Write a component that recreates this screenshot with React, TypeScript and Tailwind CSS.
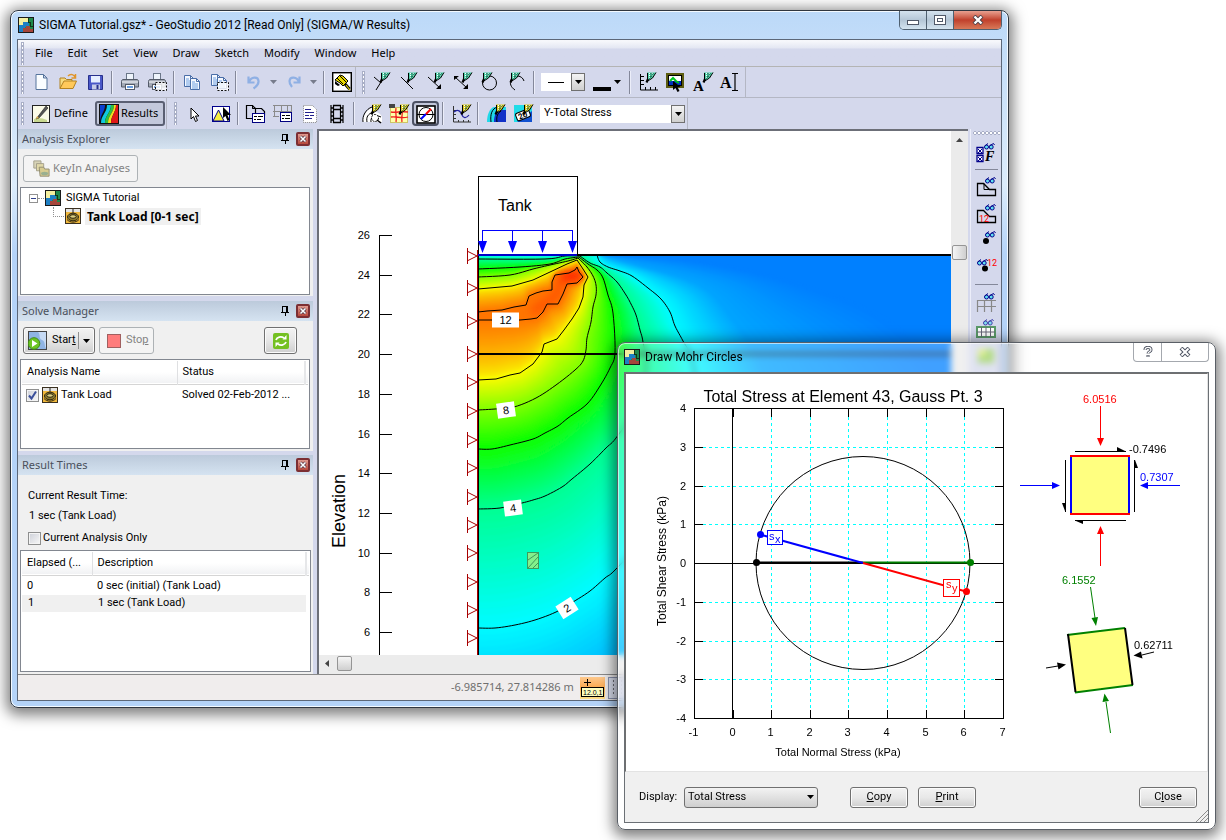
import React from "react";

type Pt = [number, number];

/* ---------- contour data ---------- */

type Level = { color: [number, number, number]; line: boolean; outer: Pt[]; inner: Pt[] };

const levels: Level[] = [
  {
    color: [0, 128, 255],
    line: false,
    outer: [[478, 900], [700, 800], [900, 600], [950, 420], [900, 330], [800, 285], [700, 262], [640, 257], [604, 255]],
    inner: [[604, 255], [560, 254], [478, 254]],
  },
  {
    color: [0, 165, 255],
    line: false,
    outer: [[478, 740], [560, 720], [640, 670], [720, 580], [780, 450], [764, 370], [730, 315], [700, 285], [640, 266], [610, 258], [601, 255]],
    inner: [[601, 255], [560, 254], [478, 254]],
  },
  {
    color: [0, 252, 255],
    line: true,
    outer: [[478, 628], [495, 628], [515, 625], [535, 620], [556, 612], [573, 602], [590, 591], [605, 578], [616, 569], [650, 530], [684, 470], [698, 410], [692, 360], [683, 341], [675, 326], [670, 312], [661, 299], [648, 288], [632, 276], [620, 271], [608, 267], [600, 262], [597, 255]],
    inner: [[597, 255], [560, 255], [478, 255]],
  },
  {
    color: [0, 255, 144],
    line: true,
    outer: [[478, 509], [500, 508], [522, 503], [533, 500], [545, 496], [562, 487], [572, 479], [590, 464], [606, 448], [616, 438], [634, 410], [646, 370], [643, 342], [640, 330], [636, 315], [631, 304], [626, 295], [617, 282], [607, 273], [600, 267], [590, 263], [580, 256]],
    inner: [[580, 256], [565, 256], [545, 259], [478, 259]],
  },
  {
    color: [10, 255, 0],
    line: true,
    outer: [[478, 449], [492, 449], [510, 445], [533, 439], [545, 433], [558, 426], [568, 418], [587, 404], [600, 386], [610, 368], [615, 353], [613, 313], [608, 295], [603, 278], [597, 270], [588, 264], [579, 257]],
    inner: [[579, 257], [565, 259], [550, 264], [520, 267], [478, 269]],
  },
  {
    color: [132, 255, 0],
    line: true,
    outer: [[478, 410], [495, 409], [514, 407], [536, 398], [556, 385], [575, 370], [583, 361], [586, 350], [587, 338], [591, 322], [593, 307], [596, 295], [596, 285], [593, 276], [587, 267], [578, 258]],
    inner: [[578, 258], [568, 261], [550, 265], [533, 269], [510, 275], [478, 277]],
  },
  {
    color: [250, 250, 0],
    line: true,
    outer: [[478, 380], [496, 379], [510, 375], [520, 373], [533, 364], [542, 352], [544, 344], [557, 339], [564, 330], [572, 319], [579, 308], [583, 297], [584, 285], [588, 277], [583, 269], [577, 260]],
    inner: [[577, 260], [567, 264], [550, 272], [533, 280], [512, 286], [478, 289]],
  },
  {
    color: [255, 116, 0],
    line: true,
    outer: [[478, 320], [520, 320], [531, 319], [537, 318], [543, 312], [547, 304], [558, 304], [563, 294], [567, 284], [577, 283], [583, 277], [579, 272], [577, 267]],
    inner: [[577, 267], [575, 270], [569, 273], [555, 275], [552, 282], [552, 290], [543, 291], [536, 293], [529, 296], [526, 305], [514, 307], [502, 310], [487, 311], [478, 312]],
  },
];

function smooth(points: Pt[]): Pt[] {
  const result: Pt[] = [];
  for (let i = 0; i < points.length - 1; i++) {
    const a = points[Math.max(i - 1, 0)];
    const b = points[i];
    const c = points[i + 1];
    const d = points[Math.min(i + 2, points.length - 1)];
    for (let s = 0; s < 6; s++) {
      const t = s / 6;
      const at = (k: 0 | 1) =>
        0.5 * (2 * b[k] + (c[k] - a[k]) * t + (2 * a[k] - 5 * b[k] + 4 * c[k] - d[k]) * t * t + (3 * b[k] - a[k] - 3 * c[k] + d[k]) * t * t * t);
      result.push([at(0), at(1)]);
    }
  }
  result.push(points[points.length - 1]);
  return result;
}

levels.slice(0, 6).forEach((l) => {
  l.outer = smooth(l.outer);
  l.inner = smooth(l.inner);
});

function resample(points: Pt[], count: number): Pt[] {
  const dist = [0];
  for (let i = 1; i < points.length; i++) {
    dist.push(dist[i - 1] + Math.hypot(points[i][0] - points[i - 1][0], points[i][1] - points[i - 1][1]));
  }
  const total = dist[dist.length - 1];
  const result: Pt[] = [];
  let seg = 1;
  for (let i = 0; i < count; i++) {
    const target = (total * i) / (count - 1);
    while (seg < points.length - 1 && dist[seg] < target) seg++;
    const t = (target - dist[seg - 1]) / (dist[seg] - dist[seg - 1]);
    const a = points[seg - 1];
    const b = points[seg];
    result.push([a[0] + (b[0] - a[0]) * t, a[1] + (b[1] - a[1]) * t]);
  }
  return result;
}

const STEPS = 18;

function buildBands() {
  const bands: { points: string; fill: string }[] = [];
  const shapes = levels.map((l) => [...resample(l.outer, 90), ...resample(l.inner, 40)]);
  const last = levels.length - 2;
  for (let i = 0; i < levels.length - 1; i++) {
    for (let s = 0; s < STEPS; s++) {
      const t = s / STEPS;
      const mix = i === last ? Math.pow(t, 0.7) : t;
      const points = shapes[i]
        .map((p, k) => {
          const q = shapes[i + 1][k];
          return (p[0] + (q[0] - p[0]) * t).toFixed(1) + "," + (p[1] + (q[1] - p[1]) * t).toFixed(1);
        })
        .join(" ");
      const c = levels[i].color.map((v, k) => Math.round(v + (levels[i + 1].color[k] - v) * mix));
      bands.push({ points, fill: `rgb(${c.join(",")})` });
    }
  }
  bands.push({
    points: shapes[shapes.length - 1].map((p) => p.join(",")).join(" "),
    fill: `rgb(${levels[levels.length - 1].color.join(",")})`,
  });
  return bands;
}

const bands = buildBands();

/* ---------- finite element view ---------- */

const elevations = [26, 24, 22, 20, 18, 16, 14, 12, 10, 8, 6];
const supports = [256, 288, 321, 354, 382, 411, 440, 468, 497, 525, 553, 582, 610, 638];

function ContourLabel({ x, y, w, angle, text }: { x: number; y: number; w: number; angle: number; text: string }) {
  return (
    <g transform={`translate(${x} ${y}) rotate(${angle})`}>
      <rect x={-w / 2} y={-7.5} width={w} height={15} fill="#fff" />
      <text y={4} textAnchor="middle" fontSize="11">{text}</text>
    </g>
  );
}

function SectionView() {
  return (
    <svg className="block h-[524px] min-w-0 flex-1 bg-white font-['Liberation_Sans',sans-serif]" role="img" aria-label="Y-Total Stress contours">
      <defs>
        <clipPath id="soil"><rect x="478" y="255" width="3000" height="400" /></clipPath>
        <filter id="soft" x="-50%" y="-50%" width="200%" height="200%"><feGaussianBlur stdDeviation="4" /></filter>
        <filter id="smooth" x="-5%" y="-5%" width="110%" height="110%"><feGaussianBlur stdDeviation="1" /></filter>
      </defs>
      <g transform="translate(-319 -131)">
        <g clipPath="url(#soil)">
          <rect x="470" y="250" width="3000" height="420" fill="#0080ff" />
          <g filter="url(#smooth)">
            {bands.map((b, i) => <polygon key={i} points={b.points} fill={b.fill} />)}
          </g>
          <g filter="url(#soft)" fill="none" strokeLinecap="round" strokeLinejoin="round">
            <path d="M535 310 L556 296 L561 281 L576 277" stroke="#ff5500" strokeWidth="9" />
            <path d="M564 277 L578 276" stroke="#ff1000" strokeWidth="8" />
          </g>
          {levels.filter((l) => l.line).map((l, i) => (
            <g key={i} fill="none" stroke="#000" strokeWidth="1">
              <polyline points={l.outer.map((p) => p.join(",")).join(" ")} />
              <polyline points={l.inner.map((p) => p.join(",")).join(" ")} />
            </g>
          ))}
        </g>
        <g shapeRendering="crispEdges">
          <path d="M478 255H3500" stroke="#000" strokeWidth="2" />
          <path d="M478 354H3500" stroke="#000" strokeWidth="2" />
          <path d="M478.500 176.500H577.500V255M478.500 176V655" stroke="#000" fill="none" />
          <path d="M478 255H577" stroke="#0000c8" strokeWidth="2" />
          <path d="M477.500 250V655" stroke="#a80000" />
          <path d="M482.500 252V230.500H572.500V252M512.500 231V252M542.500 231V252" stroke="#00f" fill="none" />
          <path d="M379.500 235V655" stroke="#000" />
          {elevations.map((e, i) => <path key={e} d={`M379 ${Math.round(235 + i * 39.7) + 0.5}H392`} stroke="#000" />)}
        </g>
        {[482.5, 512.5, 542.5, 572.5].map((x) => <path key={x} d={`M${x - 4.5} 241H${x + 4.5}L${x} 253Z`} fill="#00f" />)}
        {supports.map((y) => (
          <path key={y} d={`M467.500 ${y - 8}V${y + 8}M468 ${y - 4.5}L477 ${y}L468 ${y + 4.5}`} stroke="#a80000" fill="none" />
        ))}
        {elevations.map((e, i) => (
          <text key={e} x="370" y={Math.round(239 + i * 39.7)} textAnchor="end" fontSize="11">{e}</text>
        ))}
        <text transform="translate(345 511) rotate(-90)" textAnchor="middle" fontSize="18">Elevation</text>
        <text x="498" y="211" fontSize="16">Tank</text>
        <ContourLabel x={505.5} y={320} w={27} angle={0} text="12" />
        <ContourLabel x={506} y={410} w={18} angle={-8} text="8" />
        <ContourLabel x={513} y={508} w={18} angle={-7} text="4" />
        <ContourLabel x={567} y={608} w={18} angle={-32} text="2" />
        <rect x="527.500" y="552.500" width="11" height="16" fill="#84f08c" stroke="#3f9a5c" />
        <path d="M528 560L538 553M528 568L538 557M533 568L538 563" stroke="#3f9a5c" fill="none" />
      </g>
    </svg>
  );
}

/* ---------- Mohr circle chart ---------- */

const ticks = [0, 1, 2, 3, 4, 5, 6, 7, 8];
const tx = (i: number) => Math.round(694 + i * 38.6) + 0.5;
const ty = (i: number) => Math.round(408 + i * 38.75) + 0.5;

function MohrChart() {
  return (
    <svg className="block h-[397px] w-full bg-white font-['Liberation_Sans',sans-serif]" role="img" aria-label="Mohr circle, total stress">
      <g transform="translate(-626 -374)">
        <g shapeRendering="crispEdges" fill="none">
          {ticks.slice(2, 8).map((i) => <path key={i} d={`M${tx(i)} 417V710`} stroke="#00ffff" strokeDasharray="3 3" />)}
          {ticks.slice(1, 8).filter((i) => i !== 4).map((i) => <path key={i} d={`M703 ${ty(i)}H995`} stroke="#00ffff" strokeDasharray="3 3" />)}
          <rect x="694.500" y="408.500" width="309" height="310" stroke="#000" />
          {ticks.slice(1, 8).map((i) => <path key={i} d={`M${tx(i)} 409V417M${tx(i)} 710V718M695 ${ty(i)}H703M995 ${ty(i)}H1003`} stroke="#000" />)}
          <path d="M732.500 409V718M695 563.500H1003" stroke="#000" />
        </g>
        <ellipse cx="863" cy="563" rx="107" ry="106.500" fill="none" stroke="#000" />
        <path d="M756 562.500H863" stroke="#000" strokeWidth="2" />
        <path d="M863 562.500H970" stroke="#008000" strokeWidth="2" />
        <path d="M760 534.500L863 563" stroke="#00f" strokeWidth="2" />
        <path d="M863 563L966 591.500" stroke="#f00" strokeWidth="2" />
        <circle cx="756.500" cy="562.500" r="3.500" />
        <circle cx="970.500" cy="562.500" r="3.500" fill="#008000" />
        <circle cx="760.500" cy="534.500" r="3.500" fill="#00f" />
        <circle cx="966.500" cy="591.500" r="3.500" fill="#f00" />
        <rect x="767.500" y="530.500" width="15" height="14" fill="#fff" stroke="#00f" />
        <text x="769" y="540" fontSize="11" fill="#00f">s</text>
        <text x="775" y="543" fontSize="11" fill="#00f">x</text>
        <rect x="943.500" y="579.500" width="16" height="17" fill="#fff" stroke="#f00" />
        <text x="946" y="588" fontSize="11" fill="#f00">s</text>
        <text x="952" y="592" fontSize="11" fill="#f00">y</text>

        <text x="843" y="402" textAnchor="middle" fontSize="16">Total Stress at Element 43, Gauss Pt. 3</text>
        {ticks.map((i) => <text key={i} x="686" y={ty(i) + 3} textAnchor="end" fontSize="11">{4 - i}</text>)}
        {ticks.map((i) => <text key={i} x={tx(i) - 1} y="736" textAnchor="middle" fontSize="11">{i - 1}</text>)}
        <text x="838" y="756" textAnchor="middle" fontSize="11">Total Normal Stress (kPa)</text>
        <text transform="translate(666 561) rotate(-90)" textAnchor="middle" fontSize="12">Total Shear Stress (kPa)</text>

        <g shapeRendering="crispEdges">
          <rect x="1071" y="456" width="58" height="58" fill="#ffff80" />
          <path d="M1071 456V514M1129 456V514" stroke="#00f" strokeWidth="2" />
          <path d="M1070 456H1130M1070 514H1130" stroke="#f00" strokeWidth="2" />
          <path d="M1100.500 406V440M1100.500 532V566" stroke="#f00" />
          <path d="M1020 485.500H1054M1146 485.500H1180" stroke="#00f" />
          <path d="M1075 451.500H1126M1075 520.500H1126M1065.500 460V512M1134.500 460V512" stroke="#000" />
        </g>
        <path d="M1097 438H1104L1100.500 446ZM1097 534H1104L1100.500 526Z" fill="#f00" />
        <path d="M1052 482V489L1060 485.500ZM1148 482V489L1140 485.500Z" fill="#00f" />
        <path d="M1117 451V447L1125 451ZM1083 521V524L1076 521ZM1135 468H1138L1135 460ZM1065 503H1062L1065 511Z" />
        <text x="1083" y="403" fontSize="11" fill="#f00">6.0516</text>
        <text x="1129" y="453" fontSize="11">-0.7496</text>
        <text x="1140" y="481" fontSize="11" fill="#00f">0.7307</text>

        <path d="M1068 635L1125 628L1132.500 685L1075.500 692Z" fill="#ffff80" />
        <path d="M1067 635L1125 628M1075 692.500L1133 685" stroke="#008000" strokeWidth="2" />
        <path d="M1068 634L1075.500 692M1125 628L1132.500 685" stroke="#000" strokeWidth="2" />
        <path d="M1090.500 587L1095 618M1110.500 733L1106 702" stroke="#008000" />
        <path d="M1091.500 618L1098 617L1096 626ZM1102.500 702L1109 701L1104.500 693.500Z" fill="#008000" />
        <path d="M1046 668L1058 666M1154 652L1142 655" stroke="#000" />
        <path d="M1057 662.500L1058.500 669.500L1066 664.500ZM1141 651.500L1142.500 658.500L1133.500 655.500Z" />
        <text x="1062" y="584" fontSize="11" fill="#008000">6.1552</text>
        <text x="1134" y="649" fontSize="11">0.62711</text>
      </g>
    </svg>
  );
}

/* ---------- icons ---------- */

function Ico({ size = 20, children }: { size?: number; children: React.ReactNode }) {
  return (
    <svg width={size} height={size} viewBox="0 0 20 20" fill="none" className="shrink-0 overflow-visible" aria-hidden="true">
      {children}
    </svg>
  );
}

const Logo = () => (
  <svg width="16" height="16" viewBox="0 0 16 16" className="shrink-0" shapeRendering="crispEdges" aria-hidden="true">
    <rect width="16" height="16" fill="#1a1a1a" />
    <rect x="1" y="1" width="14" height="14" fill="#1f8a4c" />
    <path d="M1 1h9v4H6v3H1z" fill="#f4efa0" />
    <path d="M1 8h4V5h6v5H7v5H1z" fill="#1f7fc4" />
    <path d="M5 15v-4h3V9h4v3h3v3z" fill="#a5463a" />
    <path d="M10 1v4h2v4h3" stroke="#103818" fill="none" />
  </svg>
);

const TankIcon = () => (
  <svg width="16" height="16" viewBox="0 0 16 16" className="shrink-0" aria-hidden="true">
    <rect x=".5" y=".5" width="15" height="15" fill="#f0b83c" stroke="#3a3020" />
    <rect x="1" y="1" width="14" height="3" fill="#e4e4e4" />
    <path d="M8 1v4" stroke="#222" />
    <ellipse cx="8" cy="9" rx="5.500" ry="3.800" fill="#8c7a30" stroke="#2a2410" />
    <ellipse cx="8" cy="8.500" rx="3.200" ry="1.800" fill="#dccf80" stroke="#2a2410" />
    <path d="M2 11.500c3 3.500 9 3.500 12 0" stroke="#2a2410" fill="none" />
  </svg>
);

const Page = ({ x, y }: { x: number; y: number }) => (
  <g transform={`translate(${x} ${y})`}>
    <path d="M.5.5h6l3 3v8H.5z" fill="#f4f8ff" stroke="#4a6ea8" />
    <path d="M6.500.5v3h3" stroke="#4a6ea8" />
    <path d="M2 4h3M2 6h6M2 8h6M2 10h6" stroke="#6fa0e0" />
  </g>
);

const Printer = () => (
  <g>
    <rect x="6.500" y="1.500" width="7" height="6" fill="#eef4fb" stroke="#6a7688" />
    <path d="M3 7.500h14c1 0 1.500 1 1.500 2V15h-17V9.500c0-1 .5-2 1.500-2z" fill="#a3a9b5" stroke="#535a68" />
    <path d="M2 10h16" stroke="#dfe3ea" strokeWidth="1.500" />
    <rect x="5.500" y="12.500" width="9" height="5" fill="#fff" stroke="#535a68" />
    <path d="M7 15h6" stroke="#3a80d8" strokeWidth="1.500" />
  </g>
);

const Marquee = () => <rect x="8.500" y="10.500" width="11" height="8" fill="#fff" fillOpacity=".8" stroke="#111" strokeDasharray="2 1.500" />;

const Pen = ({ x = 0, y = 0, c = "#4fd0a8" }: { x?: number; y?: number; c?: string }) => (
  <g transform={`translate(${x} ${y})`}>
    <path d="M1 .5h9L6.500 6 1 9z" fill={c} />
    <path d="M1.500 1v8M10 .5L6.500 6 1 9.500" stroke="#000" />
    <path d="M3.500 1v5M6 1v3" stroke="#fff" strokeDasharray="1 1" />
    <path d="M5 1v5M7.500 1.500L3 7" stroke="#0a5038" strokeDasharray="1.500 1" />
    <path d="M2 7L.5 10.500" stroke="#000" strokeWidth="2.200" />
  </g>
);
const GoldPen = ({ x = 0, y = 0 }: { x?: number; y?: number }) => <Pen x={x} y={y} c="#e0cc20" />;

const Glasses = ({ x = 0, y = 0, o = 1 }: { x?: number; y?: number; o?: number }) => (
  <g transform={`translate(${x} ${y})`} stroke="#00008b" fill="#60e0f0" opacity={o}>
    <circle cx="2.500" cy="4" r="2" />
    <circle cx="7.200" cy="4" r="2" />
    <path d="M.8 3L4 .5M6 2.500L9.500 .5l1 1.500" fill="none" />
  </g>
);

const icons: Record<string, React.ReactNode> = {
  "New": <path d="M5 2.500h7.500l3.500 3.500V17.500H5zM12.500 2.500V6H16" fill="#fafdff" stroke="#56749c" />,
  "Open": (
    <g>
      <path d="M2 16.500V6h5l1.500 1.500H14V10" fill="#f7dc82" stroke="#b38221" />
      <path d="M2 16.500L6 9h12.500L15 16.500z" fill="#ffc95a" stroke="#b38221" />
      <path d="M10 4c3-3 6-1 7 1M17.500 2v4h-4" stroke="#e0952a" strokeWidth="1.500" />
    </g>
  ),
  "Save": (
    <g>
      <path d="M3.500 3.500h14v14h-14z" fill="#4a58c8" stroke="#27308c" />
      <rect x="6" y="4" width="9" height="6.500" fill="#e6eeff" />
      <rect x="7" y="12.500" width="8" height="5" fill="#c6cce8" />
      <rect x="11.500" y="13" width="2" height="4" fill="#27308c" />
    </g>
  ),
  "Print": <Printer />,
  "Print Selection": <g><Printer /><Marquee /></g>,
  "Copy": <g><Page x={2} y={3} /><Page x={8} y={6} /></g>,
  "Copy Selection": <g><Page x={2} y={2} /><Page x={8} y={5} /><Marquee /></g>,
  "Undo": <path d="M4.500 4.500v6h6M5 10c2-5.500 9-6 9.500-1 .3 3-2 5.500-5 7.500" stroke="#8fb0e4" strokeWidth="2.200" />,
  "Redo": <path d="M15.500 4.500v6h-6M15 10c-2-5.500-9-6-9.500-1-.2 2 .8 4 2.500 6" stroke="#8fb0e4" strokeWidth="2.200" />,
  "Zoom": (
    <g>
      <rect x=".7" y=".7" width="18.600" height="18.600" fill="#fff" stroke="#000" strokeWidth="1.400" />
      <path d="M3 8l5-5 3 1 5 5-5 5-3-3z" fill="#e8d800" stroke="#000" />
      <path d="M5 6l6 6M8 4l6 6" stroke="#000" />
      <path d="M3 9l5 4-2 1-3-2z" fill="#000" />
      <path d="M13 12l4.500 5" stroke="#000" strokeWidth="3" />
      <path d="M14 13l4 5" stroke="#e8d800" strokeWidth="1.200" />
    </g>
  ),
  "Sketch Lines": <g><path d="M2 5l7 6M9 10L4 18" stroke="#000" /><Pen x={8} y={0} /></g>,
  "Sketch Polylines": <g><path d="M2 5l12 12" stroke="#000" /><Pen x={8} y={0} /></g>,
  "Sketch Arrows": <g><path d="M2 5l12 11" stroke="#000" /><path d="M15 12v5h-5z" fill="#000" /><Pen x={8} y={0} /></g>,
  "Sketch Double Arrows": <g><path d="M2 5l12 11" stroke="#000" /><path d="M15 12v5h-5zM1 4h5L1 8z" fill="#000" /><Pen x={9} y={0} /></g>,
  "Sketch Circles": <g><circle cx="9.500" cy="11" r="7" stroke="#000" /><Pen x={2} y={0} /></g>,
  "Sketch Arcs": <g><path d="M8 18C-1 12 5 3 11 4c3 .5 5 2 6 5" stroke="#000" /><Pen x={3} y={0} /></g>,
  "Sketch Axes": <g><path d="M2.500 2v16H20M2 4.500h4M2 8.500h4M2 12.500h4M7.500 18v-3M12.500 18v-3M17.500 18v-3" stroke="#000" /><Pen x={8} y={0} /></g>,
  "Insert Picture": (
    <g>
      <rect x="2" y="2" width="16" height="13" fill="#fff" stroke="#5c5c10" strokeWidth="2" />
      <rect x="3.500" y="3.500" width="13" height="10" stroke="#000" />
      <rect x="4" y="9" width="12" height="4" fill="#0030c0" />
      <path d="M5 9l3-3 3 3 3 2" stroke="#00c820" strokeWidth="2" />
      <path d="M8 9v9l2.500-2 2 4 2-1-2-4h3z" fill="#000" />
    </g>
  ),
  "Sketch Text": <g><text x="1" y="19" fontSize="15" fontWeight="bold" fill="#000" className="font-['Liberation_Serif',serif]">A</text><Pen x={11} y={0} /></g>,
  "Modify Text": <g><text x="1" y="16" fontSize="16" fontWeight="bold" fill="#000" className="font-['Liberation_Serif',serif]">A</text><path d="M13 1.500h2.500l.5.500.500-.5H19M13 18.500h2.500l.5-.5.500.5H19M16 2v16" stroke="#000" strokeWidth="1.200" /></g>,
  "Select": <path d="M7 4v11l2.500-2.500 2 5 2-1-2-4.500h3.500z" fill="#fff" stroke="#000" />,
  "Select Regions": <g><rect x="1.500" y="2.500" width="17" height="15" fill="#fff" stroke="#00008b" /><path d="M2 17L7.500 6l5.500 11z" fill="#f8f040" stroke="#00008b" /><path d="M12 3v11l2.500-2 2 5 2-1-2-5h3.500z" fill="#000" /></g>,
  "View Preferences": <g><path d="M.5 1.500h6l3 3v10h-9z" fill="#d4d8ec" stroke="#000" strokeWidth="1.200" /><path d="M6.500 1.500v3h3" stroke="#000" /><path d="M6.500 4.500h9l3 3v4" stroke="#000" strokeWidth="1.200" /><rect x="6.500" y="9.500" width="12" height="9" fill="#fff" stroke="#000080" /><path d="M8 12.500h3M12 12.500h5M8 15.500h2M11 15.500h4" stroke="#000" /></g>,
  "View Mesh": <g><path d="M0 1.500h19M0 7.500h19M1.500 1v11M8.500 1v6M14.500 1v6M18.500 1v6M0 12.500h6" stroke="#8a8a8a" /><rect x="7.500" y="8.500" width="11" height="9" fill="#fff" stroke="#000080" /><path d="M9 11.500h3M13 11.500h4M9 14.500h2M12 14.500h5" stroke="#000" /></g>,
  "Report": <g><path d="M3.500 1.500h9l4 4v13h-13z" fill="#fff" stroke="#888" strokeDasharray="1 1" /><path d="M5 5.500h6M5 8.500h9M5 11.500h4M10 11.500h4M5 14.500h7" stroke="#20208c" /></g>,
  "Animation": <g><path d="M4 1v18M16 1v18M6.500 1v18M13.500 1v18" stroke="#000" strokeWidth="1.200" /><path d="M6 5.500h8M6 14.500h8M6 1.500h8M6 18.500h8" stroke="#000" strokeWidth="1.300" /><path d="M4 4h2M4 8h2M4 12h2M4 16h2M14 4h2M14 8h2M14 12h2M14 16h2" stroke="#000" strokeWidth="1.500" /></g>,
  "Draw Contours": <g><path d="M1 18c-1-5 2-11 8-14h4v4c3 0 6 2 7 5v5z" fill="#fff" /><path d="M1 18C0 12 4 5 10 3M5 18c-1-5 1-8 6-10M9 18c-1-5 4-8 10-5" stroke="#000" /><circle cx="13" cy="14" r="3.500" fill="#fff" stroke="#000" strokeDasharray="2 1" /><path d="M15 16l4 3" stroke="#000" strokeWidth="1.500" /><GoldPen x={9} y={0} /></g>,
  "Draw Isolines": <g><rect x="1.500" y="3.500" width="17" height="15" fill="#ffffa8" stroke="#b0a000" strokeDasharray="1 1" /><path d="M2 8c5 1 10-1 17 0M2 13c6-1 10 2 17 0M7 4c-1 5 1 9 0 14M13 6c1 5-1 7 0 12" stroke="#f02020" strokeWidth="1.300" /><rect x="0" y="0" width="6" height="4" fill="#444" /><GoldPen x={10} y={0} /></g>,
  "Draw Mohr Circles": <g><rect x="1" y="2" width="18" height="17" fill="#fff" stroke="#000" strokeWidth="1.600" /><circle cx="10" cy="10.500" r="7" stroke="#000" /><path d="M1 10.500h18" stroke="#000" /><path d="M5 15l5-5" stroke="#00f" strokeWidth="2" /><path d="M10 10l5-5" stroke="#f00" strokeWidth="2" /></g>,
  "Draw Graph": <g><path d="M2.500 2v16H20M2 6.500h3M2 10.500h3M2 14.500h3M7.500 18v-2M12.500 18v-2M17.500 18v-2" stroke="#333" /><path d="M3 8c4-4 7 0 8 3s4 4 7 0" stroke="#2020a0" strokeWidth="1.200" /><GoldPen x={10} y={0} /></g>,
  "Contour Shading": <g><path d="M1 18C1 10 4 4 8 3h12v15z" fill="#20d8e8" /><path d="M8 18c0-7 2-10 5-12h7v12z" fill="#1030c8" /><path d="M11 3C6 5 4 10 5 18M15 7c-3 2-5 5-4 11" stroke="#000" /><GoldPen x={9} y={0} /></g>,
  "Contour Labels": <g><rect x="1" y="1" width="18" height="17" fill="#20dce8" /><path d="M19 7v11H4z" fill="#1050d0" /><rect x="3" y="7" width="14" height="8" rx="2" fill="#fff" stroke="#000" transform="rotate(-22 10 11)" /><text x="5" y="14" fontSize="8" fontWeight="bold" fill="#000" transform="rotate(-22 10 11)">20</text><GoldPen x={10} y={0} /></g>,
};

const sideIcons: Record<string, React.ReactNode> = {
  "Preferences": <g><Glasses x={8} y={0} /><path d="M1 4.500h6v6H1zM1 12.500h6v6H1z" fill="#fff" stroke="#00008b" strokeWidth="1.300" /><path d="M2 6l4 4M6 6l-4 4M2 14l4 4M6 14l-4 4" stroke="#00008b" /><text x="9" y="18" fontSize="14" fontStyle="italic" fontWeight="bold" fill="#000" className="font-['Liberation_Serif',serif]">F</text></g>,
  "View Regions": <g><path d="M1.500 6.500h6l6 6h6v6h-18z" stroke="#000" strokeWidth="1.300" /><path d="M8 6.500v6h6" stroke="#000" /><Glasses x={9} y={0} /></g>,
  "View Region Numbers": <g><path d="M1.500 6.500h6l6 6h6v6h-18z" stroke="#000" strokeWidth="1.300" /><text x="3" y="18" fontSize="9" fill="#f00">12</text><Glasses x={9} y={0} /></g>,
  "View Points": <g><circle cx="10" cy="10" r="3" fill="#000" /><Glasses x={9} y={0} /></g>,
  "View Point Numbers": <g><circle cx="9" cy="10.500" r="3" fill="#000" /><Glasses x={1} y={1} /><text x="11" y="8" fontSize="9" fill="#f00">12</text></g>,
  "View Elements": <g><path d="M1 8.500h19M1 14.500h19M1.500 8v12M8.500 8v12M15.500 8v12" stroke="#888" strokeWidth="1.200" /><Glasses x={8} y={1} /></g>,
  "View Gauss Regions": <g><rect x="1" y="8" width="18" height="10" fill="#fff" stroke="#5a9a68" strokeWidth="2" /><path d="M5.500 8v10M10 8v10M14.500 8v10M1 13h18" stroke="#667" /><Glasses x={7} y={0} o={0.7} /></g>,
  "View Materials": <g><rect x="2" y="3" width="16" height="14" fill="#9ad060" /><path d="M2 3h8v7H2z" fill="#d8ec70" /></g>,
};

/* ---------- small controls ---------- */

function Tool({ name, pressed = false }: { name: string; pressed?: boolean }) {
  return (
    <button type="button" aria-label={name} aria-pressed={pressed || undefined} className={pressed ? "flex h-[25px] w-[27px] shrink-0 items-center justify-center rounded border-2 border-[#4c5164] bg-[#c2c7da]" : "flex h-[25px] w-[27px] shrink-0 items-center justify-center"}>
      <Ico>{icons[name]}</Ico>
    </button>
  );
}

const Sep = () => <span className="mx-[3px] h-[23px] w-[2px] shrink-0 border-l border-[#84889a] bg-[#eceefa]" />;
const Grip = () => <span className="mx-[3px] h-[23px] w-[3px] shrink-0 bg-[radial-gradient(circle,#ffffff_0_1px,#a9afc6_1px_2px,transparent_2px)] bg-[length:3px_4px]" />;
const Caret = ({ dim = false }: { dim?: boolean }) => (
  <svg width="7" height="4" viewBox="0 0 7 4" aria-hidden="true" className="shrink-0"><path d="M0 0h7L3.500 4z" fill={dim ? "#777c8c" : "#000"} /></svg>
);
const DropCaret = ({ name, dim = false }: { name: string; dim?: boolean }) => (
  <button type="button" aria-label={name} className="flex h-[25px] w-[13px] shrink-0 items-center justify-center"><Caret dim={dim} /></button>
);
const ComboArrow = () => (
  <span className="pointer-events-none absolute top-0 right-0 bottom-0 flex w-[14px] items-center justify-center border border-[#707070] bg-gradient-to-b from-[#f4f4f4] to-[#cfcfcf]"><Caret /></span>
);

const bevel = "flex h-[27px] items-center rounded-[3px] border border-[#707070] bg-gradient-to-b from-[#f3f3f3] via-[#e6e6e6] to-[#cfcfcf] shadow-[inset_0_0_0_1px_#fbfbfb]";
const bevelOff = "flex h-[27px] items-center rounded-[3px] border border-[#adb2b5] bg-[#f4f4f4] text-[#838383]";

function PanelHeader({ title }: { title: string }) {
  return (
    <header className="flex h-[20px] shrink-0 items-center bg-gradient-to-b from-[#bccadb] to-[#d5e3f1] pr-[3px] pl-[4px] font-['Noto_Sans',sans-serif] text-[#4a505c]">
      <h2 className="flex-1 text-[11px]">{title}</h2>
      <button type="button" aria-label={"Pin " + title} className="mr-[7px]">
        <svg width="8" height="10" viewBox="0 0 8 10" fill="none" aria-hidden="true"><path d="M1.500 6V.5h5V6M0 6.500h8M5.500 1v5M4 7v3" stroke="#000" shapeRendering="crispEdges" /></svg>
      </button>
      <button type="button" aria-label={"Close " + title} className="flex h-[14px] w-[14px] items-center justify-center rounded-[2px] border-2 border-[#7c2f33] bg-gradient-to-b from-[#e09a90] to-[#b8483c]">
        <svg width="8" height="8" viewBox="0 0 8 8" aria-hidden="true"><path d="M1.500 1.500l5 5M6.500 1.500l-5 5" stroke="#4a3040" strokeWidth="3" /><path d="M1.500 1.500l5 5M6.500 1.500l-5 5" stroke="#fff" strokeWidth="1.600" /></svg>
      </button>
    </header>
  );
}

function CheckBox({ id, checked, label }: { id: string; checked: boolean; label?: string }) {
  return (
    <span className="relative inline-flex h-[13px] w-[13px] shrink-0">
      <input id={id} type="checkbox" defaultChecked={checked} aria-label={label} className="peer h-[13px] w-[13px] appearance-none border border-[#8e8f8f] bg-gradient-to-br from-[#cdd0d8] to-[#f8f8f8] shadow-[inset_0_0_0_1px_#f4f4f4]" />
      <svg viewBox="0 0 13 13" fill="none" aria-hidden="true" className="pointer-events-none absolute inset-0 hidden peer-checked:block"><path d="M3 6.500l2.500 3L10 2.500" stroke="#3a4f9a" strokeWidth="2" /></svg>
    </span>
  );
}

/* ---------- left dock ---------- */

function Sidebar() {
  return (
    <aside className="flex w-[295px] shrink-0 flex-col bg-[#f0f0f0] text-[11px]">
      <PanelHeader title="Analysis Explorer" />
      <section className="pr-[3px] pl-[2px] pt-[6px] pb-px">
        <button type="button" disabled className={bevelOff + " ml-[3px] w-[115px] gap-[3px] pl-[8px] font-['Noto_Sans',sans-serif]"}>
          <Ico size={18}>
            <path d="M2 1h8v8H2z" fill="#d8d4b8" stroke="#a09c88" /><path d="M5 4h8v8H5z" fill="#e0d8a8" stroke="#a09c88" />
            <path d="M8 8h5l1 2h5v8H9z" fill="#d8cc90" stroke="#8f8a70" /><ellipse cx="14" cy="15" rx="4" ry="2" fill="#9ab090" />
          </Ico>
          KeyIn Analyses
        </button>
        <ul className="mt-[5px] h-[108px] border border-[#828790] bg-white pt-px pl-[8px]">
          <li>
            <div className="flex h-[18px] items-center">
              <button type="button" aria-label="Collapse SIGMA Tutorial" className="flex h-[9px] w-[9px] items-center justify-center border border-[#919191] bg-white"><span className="h-px w-[5px] bg-[#30408c]" /></button>
              <span className="mr-px w-[6px] border-b border-dotted border-[#909090]" />
              <Logo />
              <span className="ml-[5px]">SIGMA Tutorial</span>
            </div>
            <ul>
              <li className="flex h-[18px] items-center pl-[24px]">
                <span className="mr-px mb-[8px] h-[10px] w-[11px] border-b border-l border-dotted border-[#909090]" />
                <TankIcon />
                <strong className="ml-[4px] bg-[#f0f0f0] px-[2px] font-['Noto_Sans',sans-serif] text-[12px] leading-[17px] font-bold">Tank Load [0-1 sec]</strong>
              </li>
            </ul>
          </li>
        </ul>
      </section>

      <div className="h-[5px] shrink-0 bg-[#d4d8ec]" />
      <PanelHeader title="Solve Manager" />
      <section className="pr-[3px] pl-[2px] pt-[6px] pb-[2px]">
        <div className="flex pl-[3px]">
          <div className={bevel + " w-[72px]"}>
            <button type="button" className="flex flex-1 items-center gap-[5px] pl-[4px]">
              <svg width="19" height="19" viewBox="0 0 19 19" aria-hidden="true">
                <rect x=".5" y=".5" width="18" height="18" fill="#8fb4e4" stroke="#444" />
                <path d="M10 1c3 3 0 6 4 8s2 6 4 8V1z" fill="#c6daf4" />
                <circle cx="6" cy="12.500" r="5.800" fill="#6cc422" stroke="#3f8c12" />
                <path d="M4 9v7l5.500-3.500z" fill="#fff" />
              </svg>
              <span>Star<u>t</u></span>
            </button>
            <button type="button" aria-label="Start options" className="flex h-[17px] w-[16px] items-center justify-center border-l border-[#909090]"><Caret /></button>
          </div>
          <button type="button" disabled className={bevelOff + " ml-[4px] w-[55px] gap-[5px] pl-[7px]"}>
            <span className="h-[14px] w-[14px] border border-[#a06060] bg-[#ff7c7c]" />
            <span>Sto<u>p</u></span>
          </button>
          <button type="button" aria-label="Refresh" className={bevel + " mr-[13px] ml-auto w-[33px] justify-center"}>
            <svg width="16" height="16" viewBox="0 0 16 16" fill="none" aria-hidden="true">
              <rect width="16" height="16" rx="2" fill="#74c022" />
              <path d="M3 7c1-3 5-4 8-2M13 9c-1 3-5 4-8 2" stroke="#fff" strokeWidth="1.800" />
              <path d="M9.500 6.500H13.500V2zM6.500 9.500H2.500V14z" fill="#fff" />
            </svg>
          </button>
        </div>
        <div className="mt-[5px] h-[90px] border border-[#828790] bg-white px-px pt-px">
          <table className="w-full table-fixed border-collapse text-left">
            <thead>
              <tr className="h-[23px] border-b border-[#d5d5d5] bg-gradient-to-b from-white from-50% to-[#f1f2f4]">
                <th className="w-[155px] border-r border-[#dfe0e2] pl-[5px] font-normal">Analysis Name</th>
                <th className="w-[128px] border-r-2 border-[#e6e7e9] pl-[5px] font-normal">Status</th>
                <th aria-label="Filler" />
              </tr>
            </thead>
            <tbody>
              <tr className="h-[22px]">
                <td className="pl-[4px]"><span className="flex items-center gap-[3px]"><CheckBox id="solve-tank-load" label="Solve Tank Load" checked /><TankIcon /><span>Tank Load</span></span></td>
                <td colSpan={2} className="pl-[5px] whitespace-nowrap">Solved 02-Feb-2012 ...</td>
              </tr>
            </tbody>
          </table>
        </div>
      </section>

      <div className="h-[4px] shrink-0 bg-[#d4d8ec]" />
      <PanelHeader title="Result Times" />
      <section className="px-[2px] pt-[11px] pb-[2px]">
        <p className="pl-[8px] leading-[20px]">Current Result Time:</p>
        <p className="pl-[9px] leading-[20px]">1 sec (Tank Load)</p>
        <div className="flex h-[24px] items-center gap-[2px] pl-[8px]">
          <CheckBox id="current-only" checked={false} />
          <label htmlFor="current-only">Current Analysis Only</label>
        </div>
        <div className="h-[122px] border border-[#828790] bg-white px-px pt-px">
          <table className="w-full table-fixed border-collapse text-left">
            <thead>
              <tr className="h-[23px] border-b border-[#d5d5d5] bg-gradient-to-b from-white from-50% to-[#f1f2f4]">
                <th className="w-[70px] border-r border-[#dfe0e2] pl-[5px] font-normal">Elapsed (...</th>
                <th className="w-[214px] border-r-2 border-[#e6e7e9] pl-[5px] font-normal">Description</th>
                <th aria-label="Filler" />
              </tr>
            </thead>
            <tbody>
              <tr className="h-[3px]"><td colSpan={3} /></tr>
              <tr className="h-[17px]"><td className="pl-[5px]">0</td><td className="pl-[5px]">0 sec (initial) (Tank Load)</td><td /></tr>
              <tr className="h-[17px]"><td className="bg-[#f0f0f0] pl-[6px]">1</td><td className="bg-[#f0f0f0] pl-[6px]">1 sec (Tank Load)</td><td /></tr>
            </tbody>
          </table>
        </div>
      </section>
    </aside>
  );
}

/* ---------- windows ---------- */

const bar = "flex h-full items-center border-r border-[#b4b7c4]";

function MainWindow() {
  return (
    <main className="mr-[207px] rounded-[8px] border border-[#30363f] bg-gradient-to-b from-[#bcd9f8] via-[#dcecfb] via-25% to-[#b4d3f8] to-35% p-[6px] pt-0 shadow-[0_3px_14px_4px_rgba(0,0,0,0.5),inset_0_0_0_1px_#f4faff]">
      <header className="flex h-[28px] items-start pl-px">
        <div className="flex h-[28px] flex-1 items-center gap-[5px]">
          <Logo />
          <h1 className="text-[12px]">SIGMA Tutorial.gsz* - GeoStudio 2012 [Read Only] (SIGMA/W Results)</h1>
        </div>
        <div className="flex h-[19px] overflow-hidden rounded-b-[5px] border border-t-0 border-[#4f6070]">
          <button type="button" aria-label="Minimize" className="flex w-[27px] items-center justify-center border-r border-[#4f6070] bg-gradient-to-b from-[#d4e2ee] via-[#b4c6d6] to-[#d4e4f0]">
            <span className="mt-[4px] h-[5px] w-[12px] border border-[#505868] bg-white" />
          </button>
          <button type="button" aria-label="Maximize" className="flex w-[27px] items-center justify-center border-r border-[#4f6070] bg-gradient-to-b from-[#d4e2ee] via-[#b4c6d6] to-[#d4e4f0]">
            <span className="flex h-[10px] w-[12px] items-center justify-center border border-[#505868] bg-white"><span className="h-[4px] w-[6px] border border-[#505868]" /></span>
          </button>
          <button type="button" aria-label="Close" className="flex w-[47px] items-center justify-center bg-gradient-to-b from-[#e8a090] via-[#c0402c] via-50% to-[#d87858]">
            <svg width="12" height="10" viewBox="0 0 12 10" aria-hidden="true"><path d="M2 1l8 8M10 1L2 9" stroke="#4a4048" strokeWidth="4" /><path d="M2.500 1.500l7 7M9.500 1.500l-7 7" stroke="#fff" strokeWidth="2.400" /></svg>
          </button>
        </div>
      </header>

      <div className="border border-[#5c6778] bg-[#d4d8ec]">
        <nav className="flex h-[27px] items-center gap-px border-b border-[#b4b4b4] bg-gradient-to-b from-[#f6f7fb] from-5% via-[#e4e7f3] via-30% to-[#d4d8ec] to-35% font-['Noto_Sans',sans-serif] text-[11px]">
          <Grip />
          {["File", "Edit", "Set", "View", "Draw", "Sketch", "Modify", "Window", "Help"].map((m) => (
            <button key={m} type="button" className="px-[7px]">{m}</button>
          ))}
        </nav>

        <div className="flex h-[31px] items-center border-b border-[#b4b7c4]">
          <div className={bar}>
            <Grip />
            <Tool name="New" /><Tool name="Open" /><Tool name="Save" /><Sep />
            <Tool name="Print" /><Tool name="Print Selection" /><Sep />
            <Tool name="Copy" /><Tool name="Copy Selection" /><Sep />
            <Tool name="Undo" /><DropCaret name="Undo list" dim /><Tool name="Redo" /><DropCaret name="Redo list" dim /><Sep />
            <Tool name="Zoom" />
          </div>
          <div className={bar + " pr-[3px] pl-[3px]"}>
            <Grip />
            <Tool name="Sketch Lines" /><Tool name="Sketch Polylines" /><Tool name="Sketch Arrows" /><Tool name="Sketch Double Arrows" /><Tool name="Sketch Circles" /><Tool name="Sketch Arcs" /><Sep />
            <button type="button" aria-label="Line style" className="relative ml-[3px] flex h-[18px] w-[44px] items-center bg-white pl-[7px]">
              <span className="h-px w-[16px] bg-black" /><ComboArrow />
            </button>
            <button type="button" aria-label="Line colour" className="ml-[8px] flex h-[20px] w-[18px] items-end"><span className="mb-px h-[4px] w-full bg-black" /></button>
            <DropCaret name="Line thickness" />
            <span className="w-[2px]" /><Sep />
            <Tool name="Sketch Axes" /><Tool name="Insert Picture" /><Tool name="Sketch Text" /><Tool name="Modify Text" />
          </div>
        </div>

        <div className="flex h-[31px] items-center">
          <div className={bar + " pr-px font-['Noto_Sans',sans-serif] text-[11px]"}>
            <Grip />
            <button type="button" className="ml-[4px] flex h-[25px] w-[62px] items-center gap-[3px]">
              <Ico size={20}><rect x="1.500" y="1.500" width="17" height="17" fill="#fbfbe8" stroke="#222" /><path d="M3 15c4-2 8-1 13 1v2H3z" fill="#c8d890" /><path d="M5 15L15 2l2 2L8 14z" fill="#555" stroke="#222" strokeWidth=".6" /><path d="M5 15l1-3 2 2z" fill="#e0b050" /></Ico>
              <span>Define</span>
            </button>
            <button type="button" aria-pressed="true" className="ml-[2px] flex h-[25px] w-[70px] items-center gap-[2px] rounded-[3px] border-2 border-[#5a5f72] bg-[#c3c8db] pl-[2px]">
              <Ico size={20}><rect width="20" height="20" fill="#111" /><path d="M1 19C1 10 6 8 6 1H1z" fill="#0c40d0" /><path d="M2 19C2 11 8 9 8 1h4c0 8-6 10-6 18z" fill="#10c8e0" /><path d="M6 19C6 11 12 9 12 1h3c0 8-6 10-6 18z" fill="#30c040" /><path d="M9 19c0-8 6-10 6-18h2c0 8-5 10-5 18z" fill="#f0e020" /><path d="M12 19c0-8 5-10 5-18h2v18z" fill="#e01818" /></Ico>
              <span>Results</span>
            </button>
          </div>
          <div className={bar + " ml-[4px] pr-[2px]"}>
            <Grip />
            <Tool name="Select" /><Tool name="Select Regions" /><Sep />
            <Tool name="View Preferences" /><Tool name="View Mesh" /><Tool name="Report" /><Tool name="Animation" /><Sep />
            <Tool name="Draw Contours" /><Tool name="Draw Isolines" /><Tool name="Draw Mohr Circles" pressed /><Sep />
            <Tool name="Draw Graph" /><Sep />
            <Tool name="Contour Shading" /><Tool name="Contour Labels" />
            <span className="relative ml-[4px] inline-flex">
              <select aria-label="Contour parameter" className="h-[18px] w-[145px] appearance-none bg-white pl-[4px] text-[11px]"><option>Y-Total Stress</option></select>
              <ComboArrow />
            </span>
          </div>
        </div>

        <div className="flex">
          <Sidebar />
          <div className="w-[4px] shrink-0 bg-[#d4d8ec]" />
          <section className="flex min-w-0 flex-1 flex-col border-t-2 border-l-2 border-[#6c6f78] bg-[#ececec]">
            <div className="flex">
              <SectionView />
              <div className="flex w-[17px] shrink-0 flex-col items-center bg-[#ebebeb] pt-[7px]">
                <svg width="7" height="4" viewBox="0 0 7 4" aria-hidden="true"><path d="M0 4h7L3.500 0z" fill="#444" /></svg>
                <span className="mt-[103px] h-[15px] w-[15px] rounded-[2px] border border-[#959595] bg-gradient-to-r from-[#f6f6f6] to-[#cfcfcf]" />
              </div>
            </div>
            <div className="flex h-[17px] items-center pl-[6px]">
              <svg width="4" height="7" viewBox="0 0 4 7" aria-hidden="true"><path d="M4 0v7L0 3.500z" fill="#444" /></svg>
              <span className="ml-[8px] h-[15px] w-[15px] rounded-[2px] border border-[#959595] bg-gradient-to-b from-[#f6f6f6] to-[#cfcfcf]" />
            </div>
          </section>
          <div className="ml-[2px] flex w-[31px] shrink-0 flex-col items-center border-l border-[#eceefa] pt-[2px]">
            <span className="h-[4px] w-[27px] bg-[radial-gradient(circle,#ffffff_0_1px,#a9afc6_1px_2px,transparent_2px)] bg-[length:4px_4px]" />
            {Object.keys(sideIcons).map((n) => (
              <React.Fragment key={n}>
                <button type="button" aria-label={n} className="flex h-[27px] w-[27px] shrink-0 items-center justify-center first-of-type:mt-[4px]"><Ico>{sideIcons[n]}</Ico></button>
                {(n === "Preferences" || n === "View Point Numbers") && <span className="my-[3px] h-px w-[23px] shrink-0 bg-[#84889a]" />}
              </React.Fragment>
            ))}
          </div>
        </div>

        <footer className="flex h-[26px] items-center border-t border-[#8a8a8a] bg-[#f0eded] pl-[433px] font-['Noto_Sans',sans-serif] text-[11px] text-[#6f6f6f]">
          <output>-6.985714, 27.814286 m</output>
          <button type="button" aria-label="Snap coordinates" className="ml-[6px] flex h-[22px] w-[25px] items-center justify-center bg-gradient-to-b from-[#fdc88c] via-[#fba94c] to-[#fde08c]">
            <svg width="23" height="20" viewBox="0 0 23 20" aria-hidden="true" className="overflow-visible"><path d="M6.500 1v7M3 4.500h7" stroke="#000" /><rect x=".5" y="9.500" width="22" height="9" fill="#ffffc0" stroke="#000" /><text x="2" y="17" fontSize="7" fill="#000" className="font-['Liberation_Sans',sans-serif]">12.0,1</text></svg>
          </button>
          <button type="button" aria-label="Grid" className="ml-[3px] flex h-[22px] w-[25px] items-center border border-[#8a93b0] bg-[#dde2f2] pl-[3px]">
            <svg width="20" height="18" viewBox="0 0 20 18" aria-hidden="true" fill="none"><path d="M1 2h18M1 6h18M1 10h18M1 14h18" stroke="#000" strokeDasharray="1 3" /></svg>
          </button>
        </footer>
      </div>
    </main>
  );
}

function MohrDialog() {
  const push = "h-[21px] w-[58px] rounded-[3px] border border-[#707070] bg-gradient-to-b from-[#f3f3f3] via-[#e8e8e8] to-[#cfcfcf] shadow-[inset_0_0_0_1px_#fbfbfb]";
  return (
    <section role="dialog" aria-label="Draw Mohr Circles" className="absolute top-[342px] left-[617px] w-[599px] rounded-[8px] border border-[#5a5f66] bg-white/25 p-[6px] pt-0 shadow-[0_3px_14px_4px_rgba(0,0,0,0.5),inset_0_0_0_1px_rgba(255,255,255,0.6)] backdrop-blur-[3px]">
      <header className="flex h-[29px] items-start">
        <div className="flex h-[28px] flex-1 items-center gap-[5px]">
          <Logo />
          <h2 className="text-[12px]">Draw Mohr Circles</h2>
        </div>
        <div className="flex h-[19px] rounded-b-[4px] border border-t-0 border-[#a4a8ae] bg-white/50">
          <button type="button" aria-label="Help" className="flex w-[28px] items-center justify-center border-r border-[#a4a8ae]">
            <svg width="10" height="12" viewBox="0 0 10 12" fill="none" aria-hidden="true"><path d="M2 4c0-3.500 6-3.500 6 0 0 1.800-3 1.800-3 3.500M5 9v2" stroke="#4c5260" strokeWidth="3" /><path d="M2 4c0-3.500 6-3.500 6 0 0 1.800-3 1.800-3 3.500M5 9.500v1.200" stroke="#fff" strokeWidth="1.200" /></svg>
          </button>
          <button type="button" aria-label="Close dialog" className="flex w-[46px] items-center justify-center">
            <svg width="12" height="10" viewBox="0 0 12 10" aria-hidden="true"><path d="M2 1l8 8M10 1L2 9" stroke="#4c5260" strokeWidth="4" /><path d="M2.500 1.500l7 7M9.500 1.500l-7 7" stroke="#fff" strokeWidth="2" /></svg>
          </button>
        </div>
      </header>
      <div className="border border-[#6b7075] bg-[#f0f0f0]">
        <div className="border-t border-r border-b border-l border-[#6f6f6f] border-r-[#e3e3e3] border-b-[#e3e3e3]">
          <MohrChart />
        </div>
        <footer className="relative flex h-[50px] items-center pr-[11px] pl-[14px] text-[11px]">
          <label htmlFor="display" className="w-[45px]">Display:</label>
          <span className="relative inline-flex">
            <select id="display" className="h-[21px] w-[134px] appearance-none rounded-[3px] border border-[#707070] bg-gradient-to-b from-[#f3f3f3] to-[#cfcfcf] pl-[3px]"><option>Total Stress</option></select>
            <span className="pointer-events-none absolute top-0 right-[4px] flex h-full items-center"><Caret /></span>
          </span>
          <button type="button" className={push + " ml-[32px]"}><u>C</u>opy</button>
          <button type="button" className={push + " ml-[10px]"}><u>P</u>rint</button>
          <button type="button" className={push + " ml-auto"}>C<u>l</u>ose</button>
          <svg width="12" height="12" viewBox="0 0 12 12" aria-hidden="true" className="absolute right-0 bottom-0"><path d="M0 12L12 0M4 12l8-8M8 12l4-4" stroke="#8c8c8c" /></svg>
        </footer>
      </div>
    </section>
  );
}

export default function App() {
  return (
    <div className="relative min-h-screen bg-white p-[10px] font-['Roboto',sans-serif] text-black">
      <MainWindow />
      <MohrDialog />
    </div>
  );
}
